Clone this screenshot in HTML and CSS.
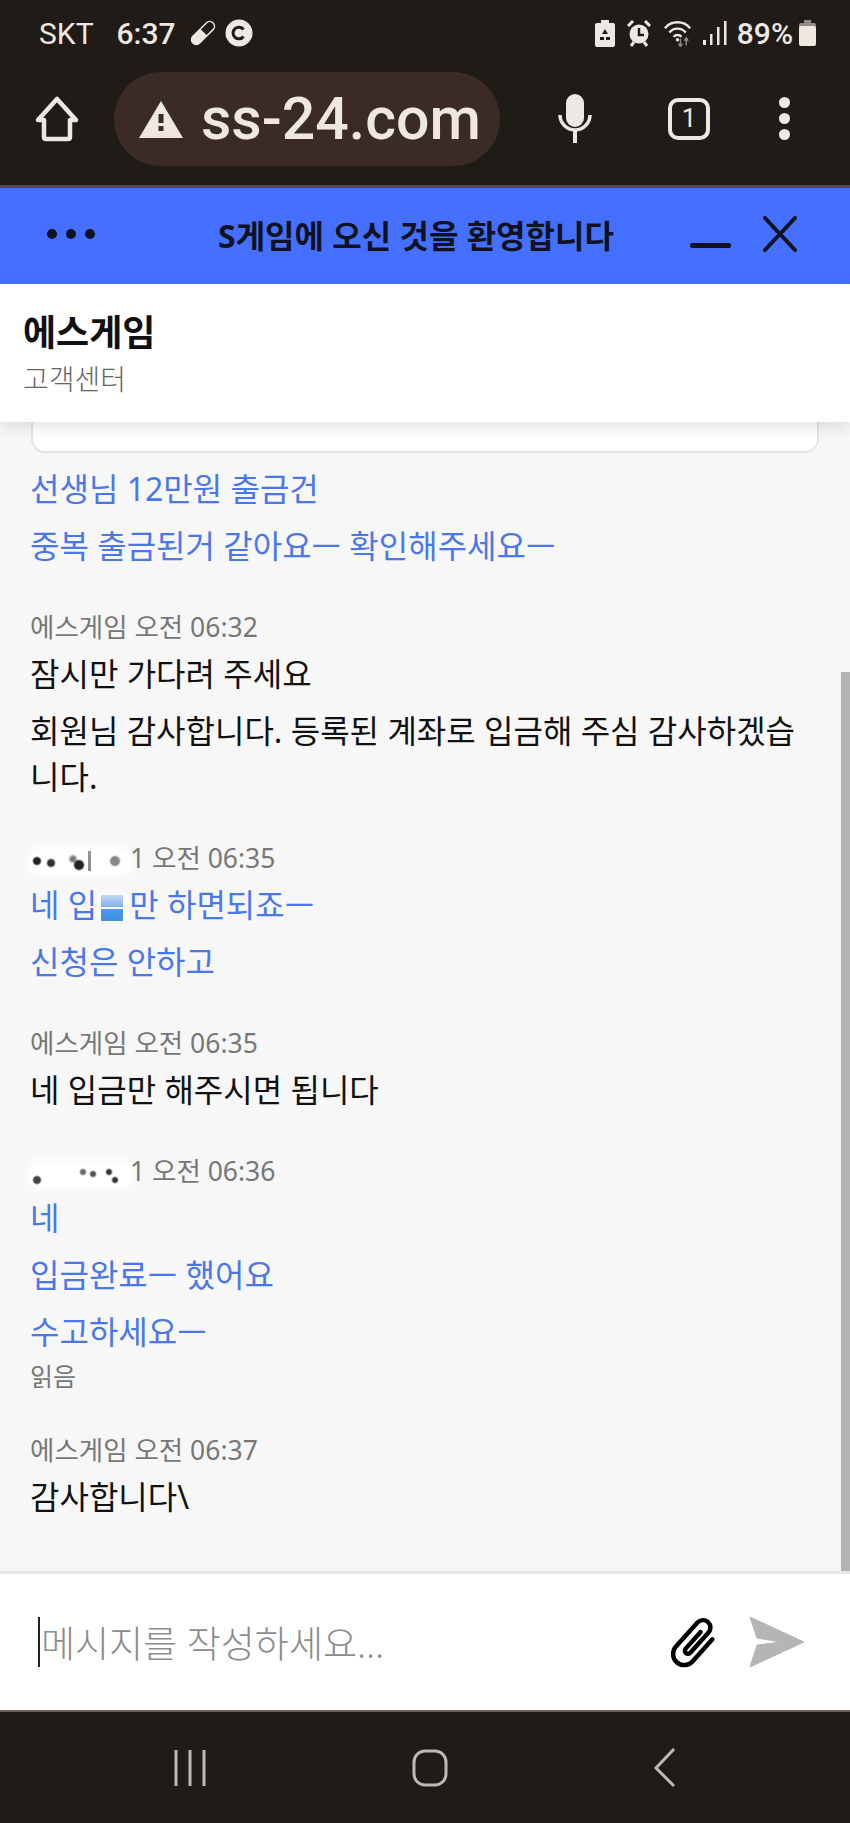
FILE: index.html
```html
<!DOCTYPE html>
<html lang="ko">
<head>
    <meta charset="UTF-8">
    <meta name="viewport" content="width=device-width, initial-scale=1.0">
    <title>에스게임 고객센터</title>
    <link rel="stylesheet" href="styles.css">
</head>
<body>
    <div class="phone">
        <!-- 상단 상태바 -->
        <div class="status-bar">
            <div class="status-left">
                <span class="carrier">SKT</span>
                <span class="clock">6:37</span>
                <svg class="st-pill" width="26" height="26" viewBox="0 0 26 26"><g transform="rotate(45 13 13)"><rect x="7.500" y="-2" width="11" height="30" rx="5.500" fill="#efe7e2"/><path d="M9 12 V3.500 A4 4 0 0 1 17 3.500 V12 Z" fill="#1f1b17"/></g></svg>
                <svg class="st-c" width="28" height="28" viewBox="0 0 28 28"><circle cx="14" cy="14" r="13.500" fill="#efe7e2"/><path d="M18.500 10.500 A5.800 5.800 0 1 0 18.500 17.500" fill="none" stroke="#1f1b17" stroke-width="3"/></svg>
            </div>
            <div class="status-right">
                <svg class="st-recycle" width="20" height="27" viewBox="0 0 20 27"><path d="M6 0h8v3h4a2 2 0 0 1 2 2v20a2 2 0 0 1-2 2H2a2 2 0 0 1-2-2V5a2 2 0 0 1 2-2h4z" fill="#efe7e2"/><path d="M10 9l3 5h-6zM5 17h4v3H5zM11 17h4v3h-4z" fill="#1f1b17"/></svg>
                <svg class="st-alarm" width="24" height="27" viewBox="0 0 24 27"><circle cx="12" cy="14" r="9.500" fill="#efe7e2"/><path d="M12 8v7h5" fill="none" stroke="#1f1b17" stroke-width="2.500"/><path d="M1 6l5-5M23 6l-5-5M4 26l3-4M20 26l-3-4" stroke="#efe7e2" stroke-width="3"/></svg>
                <svg class="st-wifi" width="31" height="28" viewBox="0 0 32 28"><g fill="none" stroke="#efe7e2" stroke-width="2.500"><path d="M2 9 A17 17 0 0 1 28 9"/><path d="M6.500 13.500 A11 11 0 0 1 23.500 13.500"/><path d="M11 18 A5 5 0 0 1 19 18"/></g><circle cx="15" cy="21" r="1.800" fill="#efe7e2"/><path d="M24 27v-7M22 22l2-3 2 3" stroke="#8f8a86" stroke-width="1.500" fill="none"/><path d="M18 20v7M16 25l2 3 2-3" stroke="#8f8a86" stroke-width="1.500" fill="none"/></svg>
                <svg class="st-signal" width="24" height="26" viewBox="0 0 24 26"><g fill="#efe7e2"><rect x="0" y="20" width="3" height="5"/><rect x="7" y="14" width="2.500" height="11"/><rect x="14" y="7" width="2.500" height="18"/><rect x="21" y="1" width="2.500" height="24"/></g></svg>
                <span class="battery-text">89%</span>
                <svg class="st-batt" width="17" height="26" viewBox="0 0 17 26"><rect x="5" y="0" width="7" height="4" fill="#8f8a86"/><rect x="0" y="3" width="17" height="5" rx="2" fill="#8f8a86"/><rect x="0" y="6" width="17" height="20" rx="2" fill="#efe7e2"/></svg>
            </div>
        </div>

        <!-- 브라우저 주소창 -->
        <div class="browser-bar">
            <svg class="home-icon" width="44" height="46" viewBox="0 0 44 46"><path d="M22 3 L41 24 H35 V41 Q35 43 33 43 H11 Q9 43 9 41 V24 H3 Z" fill="none" stroke="#efe7e2" stroke-width="4.500" stroke-linejoin="round"/></svg>
            <div class="url-box">
                <svg class="warn-icon" width="44" height="38" viewBox="0 0 44 38"><path d="M22 1 L44 38 H0 Z" fill="#efe7e2"/><rect x="19.500" y="14" width="5" height="9" fill="#3a2c24"/><rect x="19.500" y="26" width="5" height="5" fill="#3a2c24"/></svg>
                <span class="url-text">ss-24.com</span>
            </div>
            <svg class="mic-icon" width="36" height="50" viewBox="0 0 36 50"><rect x="9" y="0" width="18" height="33" rx="9" fill="#efe7e2"/><path d="M3 21 A15 15 0 0 0 33 21" fill="none" stroke="#efe7e2" stroke-width="3.500"/><path d="M18 36v13" stroke="#efe7e2" stroke-width="4"/></svg>
            <div class="tab-count">1</div>
            <div class="more-dots"><i></i><i></i><i></i></div>
        </div>

        <!-- 채팅창 제목 -->
        <div class="title-bar">
            <div class="title-menu"><i></i><i></i><i></i></div>
            <div class="title-text">S게임에 오신 것을 환영합니다</div>
            <div class="title-minimize"></div>
            <svg class="title-close" width="36" height="36" viewBox="0 0 36 36"><path d="M3 2 L33 34 M33 2 L3 34" stroke="#10131f" stroke-width="4" stroke-linecap="round"/></svg>
        </div>

        <div class="chat-head">
            <div class="chat-name">에스게임</div>
            <div class="chat-sub">고객센터</div>
        </div>

        <!-- 대화 내용 -->
        <div class="chat-body">
            <div class="scroll-thumb"></div>
            <div class="old-card"></div>

            <div class="msg-group mine">
                <p class="msg">선생님 12만원 출금건</p>
                <p class="msg">중복 출금된거 같아요ㅡ 확인해주세요ㅡ</p>
            </div>

            <div class="msg-group">
                <div class="meta">에스게임 오전 06:32</div>
                <p class="msg">잠시만 가다려 주세요</p>
                <p class="msg">회원님 감사합니다. 등록된 계좌로 입금해 주심 감사하겠습니다.</p>
            </div>

            <div class="msg-group mine">
                <div class="meta"><span class="smudge smudge-a"></span>1 오전 06:35</div>
                <p class="msg">네 입<span class="smudge-char"></span>만 하면되죠ㅡ</p>
                <p class="msg">신청은 안하고</p>
            </div>

            <div class="msg-group">
                <div class="meta">에스게임 오전 06:35</div>
                <p class="msg">네 입금만 해주시면 됩니다</p>
            </div>

            <div class="msg-group mine">
                <div class="meta"><span class="smudge smudge-b"></span>1 오전 06:36</div>
                <p class="msg">네</p>
                <p class="msg">입금완료ㅡ 했어요</p>
                <p class="msg">수고하세요ㅡ</p>
                <div class="read-mark">읽음</div>
            </div>

            <div class="msg-group">
                <div class="meta">에스게임 오전 06:37</div>
                <p class="msg">감사합니다\</p>
            </div>
        </div>

        <!-- 입력창 -->
        <div class="input-bar">
            <div class="input-text"><span class="caret"></span>메시지를 작성하세요...</div>
            <svg class="clip-icon" width="52" height="52" viewBox="4 4 42 42"><path d="M34 14 V38 A9 9 0 0 1 16 38 V12 A6 6 0 0 1 28 12 V34 A2.500 2.500 0 0 1 23 34 V16" transform="rotate(42 25 25)" fill="none" stroke="#000" stroke-width="3.600" stroke-linecap="round"/></svg>
            <svg class="send-icon" width="55" height="50" viewBox="0 0 55 50"><path d="M1 0 L55 25 L1 50 L8 28 L32 25 L8 21 Z" fill="#b5b5b5" stroke="#b5b5b5" stroke-width="1" stroke-linejoin="round"/></svg>
        </div>

        <!-- 하단 내비게이션 -->
        <div class="nav-bar">
            <svg width="34" height="38" viewBox="0 0 34 38"><path d="M3 1v36M17 1v36M31 1v36" stroke="#bdb8b3" stroke-width="3"/></svg>
            <svg width="36" height="38" viewBox="0 0 36 38"><rect x="2" y="2" width="32" height="34" rx="11" fill="none" stroke="#bdb8b3" stroke-width="3"/></svg>
            <svg width="24" height="40" viewBox="0 0 24 40"><path d="M21 1 L3 20 L21 38" fill="none" stroke="#bdb8b3" stroke-width="3"/></svg>
        </div>
    </div>
</body>
</html>
```

FILE: styles.css
```css
:root {
    --dark: #1f1b17;
    --light: #efe7e2;
    --blue: #4570ff;
    --link: #4a78e8;
}

* {
    box-sizing: border-box;
}

body {
    margin: 0;
    font-family: "Noto Sans", "Noto Sans CJK KR", sans-serif;
    background: var(--dark);
}

.phone {
    width: 850px;
    height: 1823px;
    display: flex;
    flex-direction: column;
    overflow: hidden;
}

/* 상태바 */
.status-bar {
    height: 66px;
    flex: none;
    background: var(--dark);
    color: var(--light);
    display: flex;
    justify-content: space-between;
    align-items: center;
    padding: 0 34px 0 39px;
    font-family: "Roboto", "Noto Sans", sans-serif;
    font-size: 30px;
}

.status-left,
.status-right {
    display: flex;
    align-items: center;
}

.carrier {
    margin-right: 23px;
}

.clock {
    font-weight: 500;
    margin-right: 14px;
}

.st-c {
    margin-left: 9px;
}

.st-alarm {
    margin-left: 12px;
}

.st-wifi {
    margin-left: 12px;
}

.st-signal {
    margin-left: 9px;
}

.battery-text {
    font-weight: 500;
    margin-left: 10px;
    margin-right: 6px;
}

/* 주소창 */
.browser-bar {
    height: 122px;
    flex: none;
    background: var(--dark);
    border-bottom: 3px solid #55494a;
    display: flex;
    align-items: center;
    padding: 0 0 14px 35px;
}

.url-box {
    width: 386px;
    height: 94px;
    margin-left: 35px;
    border-radius: 47px;
    background: #3a2c24;
    display: flex;
    align-items: center;
    padding-left: 25px;
    color: var(--light);
}

.warn-icon {
    margin-right: 18px;
    flex: none;
}

.url-text {
    font-family: "Roboto", sans-serif;
    font-size: 59px;
    font-weight: 500;
    white-space: nowrap;
}

.mic-icon {
    margin-left: 57px;
    flex: none;
}

.tab-count {
    width: 42px;
    height: 42px;
    margin-left: 75px;
    border: 4px solid var(--light);
    border-radius: 10px;
    color: var(--light);
    font-family: "Roboto", sans-serif;
    font-size: 26px;
    line-height: 33px;
    text-align: center;
}

.more-dots {
    margin-left: 69px;
    display: flex;
    flex-direction: column;
    gap: 5px;
}

.more-dots i {
    width: 11px;
    height: 11px;
    border-radius: 50%;
    background: var(--light);
}

/* 파란 제목줄 */
.title-bar {
    height: 96px;
    flex: none;
    background: var(--blue);
    display: flex;
    align-items: center;
    padding: 0 0 4px 47px;
    color: #10131f;
}

.title-menu {
    display: flex;
    gap: 9px;
}

.title-menu i {
    width: 10px;
    height: 10px;
    border-radius: 50%;
    background: #10131f;
}

.title-text {
    margin-left: 123px;
    width: 472px;
    font-size: 32px;
    font-weight: 700;
    white-space: nowrap;
}

.title-minimize {
    width: 41px;
    height: 5px;
    margin-top: 22px;
    border-radius: 2px;
    background: #10131f;
    flex: none;
}

.title-close {
    margin-left: 31px;
    flex: none;
}

/* 상담원 이름 */
.chat-head {
    height: 138px;
    flex: none;
    background: #fff;
    padding: 24px 23px 0;
    position: relative;
    z-index: 2;
    box-shadow: 0 6px 14px rgba(0, 0, 0, 0.1);
}

.chat-name {
    font-size: 36px;
    font-weight: 700;
    line-height: 50px;
    color: #111;
}

.chat-sub {
    font-size: 28px;
    line-height: 42px;
    color: #666;
    font-weight: 300;
}

/* 대화 영역 */
.chat-body {
    flex: 1;
    min-height: 0;
    position: relative;
    background: #f7f7f7;
    border-bottom: 3px solid #e6e6e6;
    padding: 0 31px 0 30px;
    overflow: hidden;
}

.scroll-thumb {
    position: absolute;
    top: 250px;
    right: 0;
    bottom: 0;
    width: 9px;
    background: #b4b4b4;
}

.old-card {
    height: 31px;
    margin: 0 0 13px 1px;
    background: #fff;
    border: 2px solid #e4e4e4;
    border-top: none;
    border-radius: 0 0 14px 14px;
}

.msg-group {
    margin-bottom: 39px;
}

.msg {
    margin: 0 0 11px;
    font-size: 32px;
    line-height: 46px;
    color: #111;
    word-break: break-all;
}

.mine .msg {
    color: var(--link);
}

.meta {
    font-size: 26.500px;
    line-height: 38px;
    margin-bottom: 5px;
    color: #777;
    white-space: nowrap;
}

.read-mark {
    font-size: 25px;
    line-height: 32px;
    margin-top: -6px;
    margin-bottom: 1px;
    color: #777;
}

/* 뭉개진 글자 자국 */
.smudge {
    display: inline-block;
    height: 24px;
    vertical-align: middle;
    background-color: #fff;
    border-radius: 10px;
    box-shadow: 0 0 10px 4px rgba(255, 255, 255, 0.8);
    background-repeat: no-repeat;
}

.smudge-a {
    width: 100px;
    background-image:
        radial-gradient(circle, #222 0 3px, transparent 5px),
        radial-gradient(circle, #333 0 3px, transparent 5px),
        radial-gradient(circle, #222 0 4px, transparent 6px),
        linear-gradient(#999, #888),
        radial-gradient(circle, #777 0 2px, transparent 5px),
        radial-gradient(circle, #888 0 4px, transparent 6px);
    background-size: 14px 14px, 14px 14px, 14px 14px, 3px 20px, 14px 14px, 14px 14px;
    background-position: 0 5px, 14px 7px, 42px 9px, 58px 2px, 36px 3px, 78px 5px;
}

.smudge-b {
    width: 100px;
    background-image:
        radial-gradient(circle, #444 0 3px, transparent 5px),
        radial-gradient(circle, #666 0 2px, transparent 4px),
        radial-gradient(circle, #333 0 2px, transparent 4px),
        radial-gradient(circle, #333 0 2px, transparent 4px),
        radial-gradient(circle, #555 0 2px, transparent 4px);
    background-size: 10px 10px;
    background-position: 2px 13px, 48px 5px, 74px 5px, 80px 13px, 58px 7px;
}

.smudge-char {
    display: inline-block;
    width: 32px;
    height: 30px;
    vertical-align: -5px;
    background:
        linear-gradient(#4a9be8, #3f8fe6) 4px 17px / 22px 12px no-repeat,
        linear-gradient(#c4d9f5, #7eb0ee) 4px 3px / 22px 12px no-repeat,
        #fdfdfd;
    border-radius: 6px;
}

/* 입력창 */
.input-bar {
    height: 136px;
    flex: none;
    background: #fff;
    display: flex;
    align-items: center;
    padding: 0 46px 0 38px;
}

.input-text {
    flex: 1;
    font-size: 37px;
    font-weight: 300;
    color: #8c8c8c;
    display: flex;
    align-items: center;
    white-space: nowrap;
}

.caret {
    width: 2px;
    height: 50px;
    margin-right: 1px;
    background: #222;
}

.send-icon {
    margin-left: 28px;
    flex: none;
}

/* 내비게이션 */
.nav-bar {
    height: 113px;
    flex: none;
    background: var(--dark);
    border-top: 2px solid #6b6259;
    display: flex;
    align-items: center;
    padding: 0 173px;
    justify-content: space-between;
}
```
